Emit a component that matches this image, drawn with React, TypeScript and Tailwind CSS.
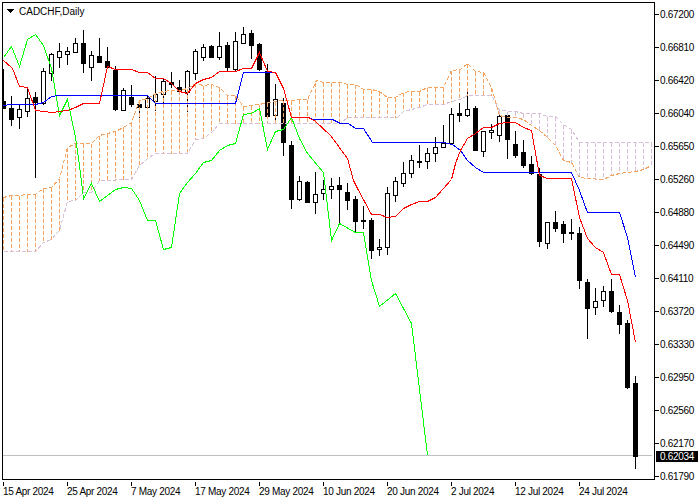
type P = [number, number];
// [high, bodyTop, bodyBottom, low, isWhite]
const C: [number, number, number, number, number][] = [
[68,101,108,108,0],[95,108,119,125,0],[103,109,117,128,1],[88,98,111,116,1],[91,97,102,177,0],[67,71,103,104,1],[52,54,73,80,1],[42,51,57,67,1],[46,51,54,64,1],[37,43,52,52,1],
[29,43,63,72,0],[50,55,67,80,1],[37,56,62,62,0],[46,61,67,68,0],[65,70,109,110,0],[87,90,110,110,1],[84,97,104,106,0],[99,104,107,117,0],[94,98,107,107,1],[75,94,101,110,1],
[77,81,94,103,1],[71,82,84,87,0],[79,87,91,93,0],[69,71,92,111,1],[48,51,73,79,1],[43,47,57,60,1],[44,46,57,57,0],[31,46,57,59,1],[41,45,67,70,0],[31,41,69,70,1],
[26,34,43,43,1],[29,33,45,58,0],[42,44,69,70,0],[63,71,116,117,0],[83,99,115,120,1],[97,103,142,155,0],[140,145,199,208,0],[175,181,199,200,1],[180,182,202,202,0],[171,194,202,213,1],
[179,189,193,199,1],[177,186,189,198,1],[176,185,189,222,0],[182,192,200,209,0],[195,199,221,231,0],[205,220,221,228,0],[217,220,250,258,0],[238,247,249,255,1],[186,193,247,254,1],[176,181,195,201,1],
[161,173,183,186,1],[154,160,173,177,1],[144,161,162,167,0],[147,153,161,168,1],[136,147,153,161,1],[124,143,147,147,1],[107,114,143,143,1],[102,113,115,121,0],[89,109,115,116,1],[105,108,150,150,0],
[130,131,151,156,1],[123,130,132,138,1],[109,116,135,141,1],[112,115,139,158,0],[130,144,155,157,0],[139,152,165,167,0],[155,164,173,174,0],[167,174,241,246,0],[221,222,243,248,1],[210,222,228,231,0],
[220,224,233,242,0],[218,232,233,239,0],[226,233,280,288,0],[278,282,308,338,0],[287,301,307,314,1],[285,291,300,306,1],[278,291,311,312,0],[304,312,324,333,0],[319,323,387,388,0],[375,383,456,468,0],
];

const red: P[] = [[3,60],[12,68],[19,86],[27,87],[35,110],[52,112],[59,111],[67,110],[75,107],[83,103],[99,103],[107,66],[115,69],[131,69],[139,72],[147,72],[155,78],[163,78],[171,83],[179,91],[187,93],[195,83],[203,79],[211,77],[219,71],[235,71],[243,68],[251,68],[259,52],[267,71],[275,72],[283,88],[291,117],[308,117],[315,121],[330,135],[347,158],[353,180],[357,188],[371,214],[379,214],[387,217],[395,216],[403,208],[411,204],[419,201],[427,201],[435,197],[443,188],[451,179],[455,163],[460,150],[467,138],[475,133],[483,127],[491,127],[499,123],[507,122],[515,122],[523,127],[531,130],[539,175],[547,178],[571,178],[579,217],[587,238],[595,247],[603,252],[611,274],[619,274],[627,300],[635,342]];
const blue: P[] = [[3,105],[11,104],[35,104],[43,102],[51,96],[59,95],[147,95],[155,103],[235,103],[243,72],[275,72],[283,88],[291,117],[308,117],[313,119],[332,119],[340,123],[348,123],[355,128],[363,128],[372,142],[443,142],[452,144],[460,150],[467,160],[475,167],[483,172],[571,172],[579,190],[587,212],[619,212],[627,237],[635,277]];
const green: P[] = [[3,57],[11,46],[19,66],[27,39],[35,34],[43,45],[51,68],[59,115],[67,99],[75,137],[79,165],[83,198],[91,183],[99,201],[107,195],[115,189],[123,187],[131,188],[139,200],[147,220],[155,220],[163,249],[171,247],[179,193],[187,182],[195,173],[203,162],[211,160],[219,150],[227,145],[235,143],[243,114],[251,113],[259,108],[267,149],[275,131],[283,129],[291,117],[299,138],[307,153],[323,172],[331,240],[339,223],[355,232],[363,232],[371,280],[379,306],[395,293],[411,323],[427,455]];
const spanA: P[] = [[3,197],[11,195],[35,194],[43,188],[51,187],[59,178],[67,147],[75,143],[91,143],[99,135],[107,133],[115,131],[123,127],[131,122],[139,100],[147,98],[155,93],[163,91],[171,90],[179,90],[187,88],[195,83],[203,85],[211,84],[219,87],[227,95],[235,95],[243,106],[251,105],[259,104],[267,102],[283,100],[307,99],[316,80],[323,82],[340,82],[347,84],[355,84],[363,89],[371,89],[379,91],[387,97],[395,97],[403,92],[411,91],[419,91],[427,87],[443,87],[451,70],[460,69],[467,63],[475,71],[483,72],[491,87],[499,115],[507,117],[515,117],[523,119],[531,125],[539,130],[547,137],[555,145],[563,160],[571,162],[579,177],[587,178],[603,179],[611,175],[619,173],[635,171],[643,169],[651,165]];
const spanB: P[] = [[3,251],[35,251],[43,242],[51,239],[59,230],[67,201],[75,200],[83,192],[91,192],[99,180],[131,179],[139,165],[147,158],[155,153],[187,153],[195,139],[203,138],[211,132],[219,123],[340,123],[347,117],[397,117],[403,111],[419,107],[427,104],[443,104],[451,101],[460,99],[467,95],[491,95],[499,110],[515,111],[523,113],[539,113],[547,116],[555,116],[563,124],[571,129],[579,142],[651,142]];

const at = (line: P[], x: number) => {
  for (let i = 1; i < line.length; i++) {
    const [x0, y0] = line[i - 1];
    const [x1, y1] = line[i];
    if (x <= x1) return y0 + ((y1 - y0) * (x - x0)) / (x1 - x0);
  }
  return line[line.length - 1][1];
};
const pts = (l: P[]) => l.map((p) => p.join(",")).join(" ");
const hatch = Array.from({ length: 82 }, (_, i) => 3 + 8 * i);

const prices = ["0.67200","0.66810","0.66420","0.66040","0.65650","0.65260","0.64880","0.64490","0.64110","0.63720","0.63330","0.62950","0.62560","0.62170","0.61790"];
const dates = ["15 Apr 2024","25 Apr 2024","7 May 2024","17 May 2024","29 May 2024","10 Jun 2024","20 Jun 2024","2 Jul 2024","12 Jul 2024","24 Jul 2024"];

export default function App() {
  return (
    <div className="w-[700px] h-[500px] bg-white overflow-hidden pl-[2px] pt-[2px] text-black text-[10px] leading-[11px] font-['Liberation_Sans',Arial,sans-serif]">
      <div className="flex">
        <div className="relative w-[653px] h-[478px] border border-black shrink-0">
          <svg width="651" height="476" viewBox="3 3 651 476" shapeRendering="crispEdges" className="block">
            <g transform="translate(0.5 0.5)">
              <line x1="0" y1="455" x2="651" y2="455" stroke="#c0c0c0" />
              {C.map(([h, t, b, l, w], i) => {
                const x = 3 + 8 * i;
                return (
                  <g key={i}>
                    <line x1={x} y1={h} x2={x} y2={l} stroke="#000" />
                    <rect x={x - 2} y={t} width={4} height={b - t} fill={w ? "#fff" : "#000"} stroke="#000" />
                  </g>
                );
              })}
              {hatch.map((x) => {
                const a = Math.round(at(spanA, x));
                const b = Math.round(at(spanB, x));
                return (
                  <line key={x} x1={x} y1={Math.min(a, b)} x2={x} y2={Math.max(a, b)} stroke={a < b ? "#f4a460" : "#d8bfd8"} strokeDasharray="4 2" />
                );
              })}
              <polyline points={pts(spanB)} fill="none" stroke="#d8bfd8" strokeDasharray="4 2" />
              <polyline points={pts(spanA)} fill="none" stroke="#f4a460" strokeDasharray="4 2" />
              <polyline points={pts(green)} fill="none" stroke="#00ff00" />
              <polyline points={pts(blue)} fill="none" stroke="#0000ff" />
              <polyline points={pts(red)} fill="none" stroke="#ff0000" />
            </g>
          </svg>
          <div className="absolute left-[4px] top-[2px] flex items-center gap-[5px] h-[12px]">
            <svg width="7" height="4" viewBox="0 0 7 4" shapeRendering="crispEdges" className="block">
              <path d="M0 0H7L3.5 4Z" fill="#000" />
            </svg>
            <span>CADCHF,Daily</span>
          </div>
        </div>
        <div className="relative flex-1 flex flex-col gap-[22px] pt-[7px] tracking-[-0.3px]">
          {prices.map((p) => (
            <div key={p} className="flex items-center h-[11px] whitespace-nowrap">
              <div className="w-[4px] h-px bg-black mr-[1px]" />
              <span>{p}</span>
            </div>
          ))}
          <div className="absolute left-[1px] top-[449px] w-[42px] h-[11px] bg-black text-white pl-[4px] flex items-center">
            0.62034
          </div>
        </div>
      </div>
      <div className="flex pl-[1px] tracking-[-0.3px]">
        {dates.map((d) => (
          <div key={d} className="w-[64px] shrink-0 whitespace-nowrap">
            <div className="w-px h-[4px] bg-black" />
            <div className="h-[11px]">{d}</div>
          </div>
        ))}
      </div>
    </div>
  );
}
